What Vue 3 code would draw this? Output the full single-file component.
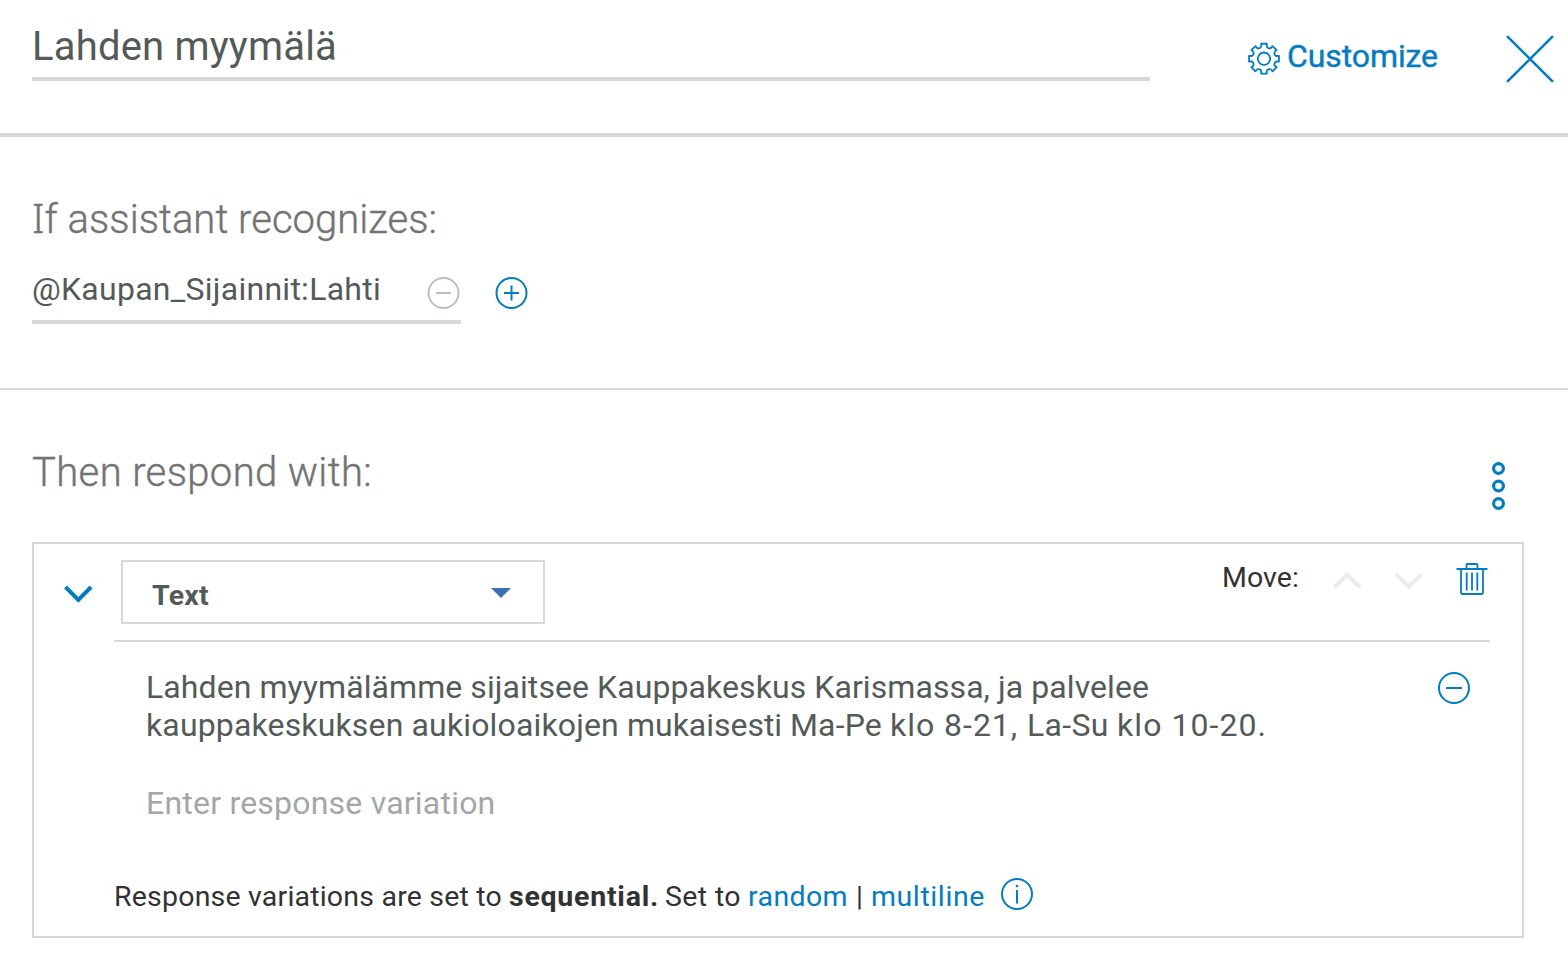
<script setup>
const responseLines = [
  [{ text: 'Lahden myymälämme sijaitsee Kauppakeskus Karismassa, ja palvelee', width: 1003 }],
  [
    { text: 'kauppakeskuksen aukioloaikojen ', width: 481 },
    { text: 'mukaisesti ', width: 163 },
    { text: 'Ma-Pe ', width: 100 },
    { text: 'klo 8-21, ', width: 137 },
    { text: 'La-Su ', width: 90 },
    { text: 'klo 10-20.', width: 150 },
  ],
]

// Tracks a run of text so that it spans the given width in pixels.
const vFit = {
  mounted(el, { value }) {
    const natural = el.getBoundingClientRect().width
    el.style.letterSpacing = `${(value - natural) / el.textContent.length}px`
  },
}

// Eight-toothed gear outline centred on the origin.
function gearPath() {
  const parts = []
  const at = (r, a) => [r * Math.sin(a), -r * Math.cos(a)].map((n) => n.toFixed(2)).join(' ')
  for (let i = 0; i < 8; i++) {
    const a = (i * Math.PI) / 4
    parts.push(`${i ? 'L' : 'M'}${at(12.9, a - 0.21)}`)
    parts.push(`L${at(15.2, a - 0.19)}`)
    parts.push(`L${at(15.2, a + 0.19)}`)
    parts.push(`L${at(12.9, a + 0.21)}`)
    parts.push(`C${at(11.2, a + 0.28)} ${at(11.2, a + Math.PI / 4 - 0.28)} ${at(12.9, a + Math.PI / 4 - 0.21)}`)
  }
  return parts.join('') + 'Z'
}
const gear = gearPath()
</script>

<template>
  <main class="panel">
    <header class="head">
      <div class="name"><span v-fit="305">Lahden myymälä</span></div>
      <div class="customize">
        <svg class="gear" width="34" height="34" viewBox="-17 -16.7 34 34">
          <path :d="gear" />
          <circle r="6.2" />
        </svg>
        <span v-fit="151">Customize</span>
      </div>
      <svg class="close" width="50" height="50" viewBox="0 0 50 50">
        <path d="M2.8 2.8 47.2 47.2M47.2 2.8 2.8 47.2" />
      </svg>
    </header>

    <section class="condition">
      <h2><span v-fit="405"><span class="slab">I</span>f assistant recognizes:</span></h2>
      <div class="row">
        <div class="field">
          <span v-fit="349">@Kaupan_Sijainnit:Lahti</span>
          <svg class="muted" width="34" height="34" viewBox="-16.5 -17 34 34">
            <circle r="15" />
            <path d="M-7.5 0H7.5" />
          </svg>
        </div>
        <svg class="add" width="34" height="34" viewBox="-17.5 -17 34 34">
          <circle r="15" />
          <path d="M-7.5 0H7.5M0-7.5V7.5" />
        </svg>
      </div>
    </section>

    <section class="respond">
      <div class="respond-head">
        <h2><span v-fit="340">Then respond with:</span></h2>
        <svg class="dots" width="14" height="50" viewBox="-0.5 0 14 50">
          <circle cx="7" cy="7.5" r="4.9" />
          <circle cx="7" cy="25" r="4.9" />
          <circle cx="7" cy="42.5" r="4.9" />
        </svg>
      </div>

      <div class="card">
        <div class="toolbar">
          <svg class="toggle" width="30" height="20" viewBox="0 0 30 20">
            <path d="M1.5 3 14.3 15.8 27.1 3" />
          </svg>
          <div class="select">
            <span v-fit="57">Text</span>
            <svg width="20" height="10" viewBox="0 0 20 10"><path d="M0 0H20L10 10Z" /></svg>
          </div>
          <div class="move">
            <span class="label" v-fit="77">Move:</span>
            <svg class="up" width="30" height="20" viewBox="0 0 30 20"><path d="M2.3 17.5 15.2 4.8 28.1 17.5" /></svg>
            <svg class="down" width="30" height="20" viewBox="0 0 30 20"><path d="M3 3 15.8 15.6 28.6 3" /></svg>
            <svg class="trash" width="32" height="34" viewBox="0 0 32 34">
              <path d="M0.5 7H31.5M5 7V30.2Q5 32 6.8 32H25.2Q27 32 27 30.2V7M10.5 7V3Q10.5 2 11.5 2H20.5Q21.5 2 21.5 3V7M10.7 10.5V28.5M16 10.5V28.5M21.3 10.5V28.5" />
            </svg>
          </div>
        </div>

        <div class="responses">
          <div class="text">
            <div v-for="(line, i) in responseLines" :key="i" class="line">
              <span v-for="part in line" :key="part.text" v-fit="part.width">{{ part.text }}</span>
            </div>
            <div class="placeholder"><span v-fit="349.5">Enter response variation</span></div>
          </div>
          <svg class="remove" width="34" height="34" viewBox="-17 -17 34 34">
            <circle r="15" />
            <path d="M-8 0H8" />
          </svg>
        </div>

        <div class="footer">
          <span class="lead" v-fit="388">Response variations are set to</span>
          <b class="mode" v-fit="150">sequential.</b>
          <span class="setto" v-fit="76">Set to</span>
          <a class="random" v-fit="100">random</a>
          <span class="bar">|</span>
          <a v-fit="114">multiline</a>
          <svg width="34" height="34" viewBox="-17 -17 34 34">
            <circle r="15" />
            <path d="M0-4V9.5" />
            <circle class="tittle" cy="-8" r="1.3" />
          </svg>
        </div>
      </div>
    </section>
  </main>
</template>

<style>
body {
  background: #fff;
}
</style>

<style scoped>
.panel {
  width: 1568px;
  height: 960px;
  overflow: hidden;
  background: #fff;
  color: #535b59;
  font-family: Roboto, "Liberation Sans", sans-serif;
  white-space: nowrap;
}
svg {
  display: block;
  flex: none;
  fill: none;
  stroke: #047cc0;
  stroke-width: 2;
  overflow: visible;
}
h2 {
  margin: 0;
  font-size: 40px;
  font-weight: 300;
  line-height: 53px;
  color: #737373;
  -webkit-text-stroke: 0.4px #737373;
}
.slab {
  font-family: "Noto Sans", sans-serif;
}
.head {
  display: flex;
  box-sizing: border-box;
  height: 137px;
  padding: 20px 0 0 32px;
  border-bottom: 4px solid #d8d8d8;
}
.name {
  box-sizing: border-box;
  width: 1118px;
  height: 61px;
  border-bottom: 4px solid #d8d8d8;
  font-size: 40px;
  line-height: 53px;
}
.customize {
  display: flex;
  width: 259px;
  height: 40px;
  margin: 16px 0 0 97px;
  gap: 6px;
  color: #047cc0;
  font-size: 32px;
  line-height: 41px;
}
.customize span {
  -webkit-text-stroke: 0.4px #047cc0;
}
.gear {
  margin-top: 6px;
  stroke-width: 1.8;
  stroke-linejoin: round;
}
.close {
  margin: 14px 0 0 -1px;
  stroke-width: 2.6;
  stroke-linecap: round;
}
.condition {
  box-sizing: border-box;
  height: 253px;
  padding: 54px 32px 0;
  border-bottom: 2px solid #d8d8d8;
}
.condition h2 {
  height: 52px;
}
.row {
  display: flex;
  height: 57px;
  margin-top: 24px;
}
.field {
  display: flex;
  justify-content: space-between;
  box-sizing: border-box;
  width: 429px;
  border-bottom: 4px solid #d8d8d8;
  font-size: 32px;
  line-height: 44px;
}
.muted {
  margin-top: 9px;
  stroke: #b8c1c1;
}
.add {
  margin: 9px 0 0 33px;
}
.respond {
  padding: 56px 44px 0 32px;
}
.respond-head {
  display: flex;
  justify-content: space-between;
  height: 96px;
}
.dots {
  margin: 15px 19px 0 0;
  stroke-width: 3.2;
}
.card {
  box-sizing: border-box;
  height: 396px;
  padding: 16px 32px 0 30px;
  border: 2px solid #d8d8d8;
}
.toolbar {
  display: flex;
  height: 80px;
}
.toggle {
  margin-top: 24px;
  stroke-width: 4;
}
.select {
  display: flex;
  justify-content: space-between;
  align-items: center;
  box-sizing: border-box;
  width: 424px;
  height: 64px;
  margin-left: 27px;
  padding: 6px 32px 0 29px;
  border: 2px solid #d8d8d8;
  font-size: 28.5px;
  font-weight: 700;
}
.select svg {
  margin-top: -5px;
  fill: #3d70b2;
  stroke: none;
}
.move {
  display: flex;
  margin-left: auto;
  color: #323232;
  font-size: 28.5px;
  line-height: 36px;
}
.up {
  margin: 10px 0 0 33px;
  stroke: #ececec;
  stroke-width: 4;
}
.down {
  margin: 11px 0 0 31px;
  stroke: #ececec;
  stroke-width: 4;
}
.trash {
  margin: 2px 2px 0 33px;
  stroke-width: 1.8;
}
.responses {
  display: flex;
  justify-content: space-between;
  box-sizing: border-box;
  height: 214px;
  margin-left: 50px;
  padding: 26px 19px 0 32px;
  border-top: 2px solid #d8d8d8;
}
.text {
  font-size: 32px;
  line-height: 38px;
}
.line {
  display: flex;
  white-space: pre;
}
.placeholder {
  margin-top: 40px;
  color: #a3a7a6;
}
.remove {
  margin-top: 3px;
}
.footer {
  display: flex;
  margin: 22px 0 0 50px;
  color: #323232;
  font-size: 28.5px;
  line-height: 41px;
}
.lead {
  margin-right: 7px;
}
.mode {
  margin-right: 6px;
  font-weight: 700;
}
.setto {
  margin-right: 7px;
}
.random,
.bar {
  margin-right: 8px;
}
.footer a {
  color: #047cc0;
}
.footer svg {
  margin: 1px 0 0 15px;
}
.tittle {
  fill: #047cc0;
  stroke: none;
}
</style>
